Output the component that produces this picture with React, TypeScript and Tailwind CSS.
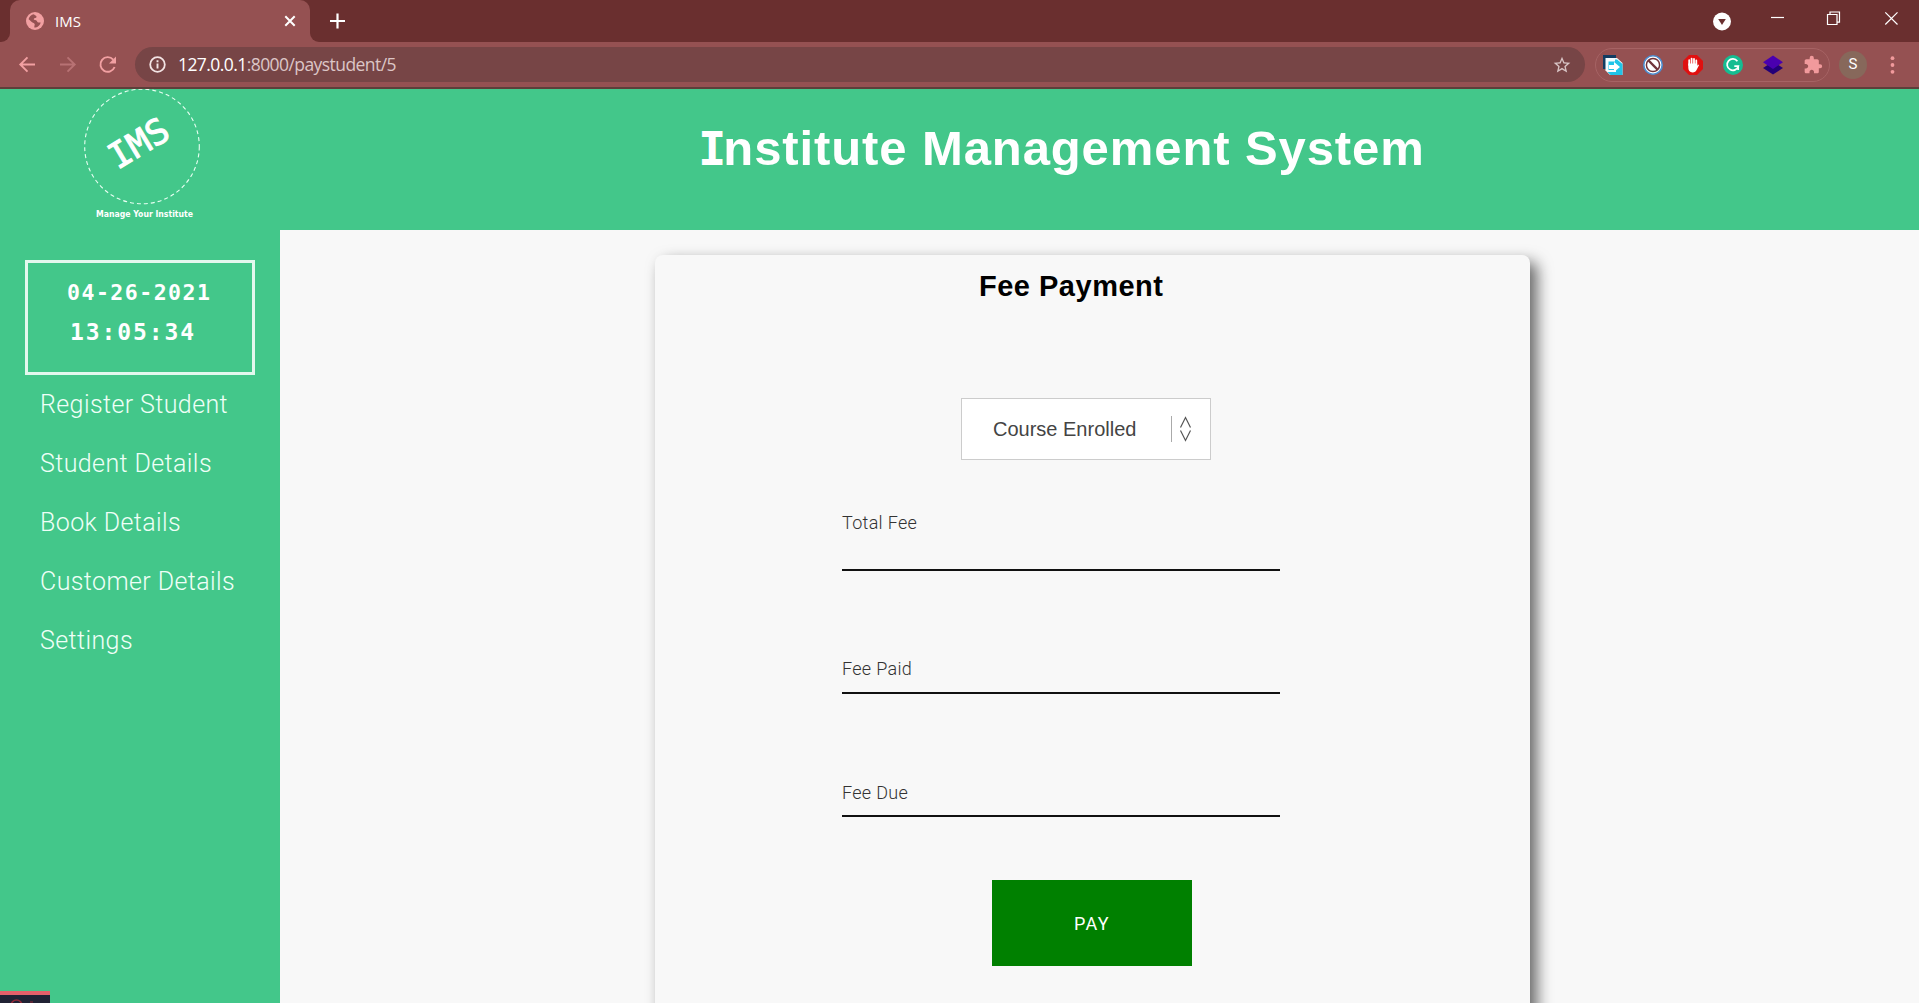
import React from "react";

const navItems = ["Register Student", "Student Details", "Book Details", "Customer Details", "Settings"];

function TabStrip() {
  return (
    <div className="flex h-[42px] w-full shrink-0 bg-[#6a2f2f]">
      <div className="flex w-[10px] items-end bg-[#955152]">
        <div className="h-full w-full rounded-br-[9px] bg-[#6a2f2f]" />
      </div>
      <div className="flex w-[300px] items-center rounded-t-[10px] bg-[#955152] pl-[16px] pr-[14px]">
        <svg width="18" height="18" viewBox="0 0 18 18">
          <circle cx="9" cy="9" r="9" fill="#f2a0a2" />
          <path d="M7 2.4 C7.8 3.6 9.8 3 10 4.8 C9.8 6.3 7.8 5.6 7.5 7.2 C7.6 8.4 10.6 7.6 11.2 9.2 C11.6 10.4 13.4 9.8 14.8 9.6 C14.6 12.4 12.6 15 9.2 15.5 C8.8 13.6 10 12.4 8.4 11.4 C6 11 4.4 9.2 2.4 8.2 C2.6 5.6 4.2 3.2 7 2.4Z" fill="#955152" transform="rotate(8 9 9)" />
        </svg>
        <span className="ml-[11px] text-[15px] leading-none text-white">IMS</span>
        <svg className="ml-auto" width="12" height="12" viewBox="0 0 12 12" stroke="#fff" strokeWidth="2">
          <path d="M1.3 1.3 10.7 10.7M10.7 1.3 1.3 10.7" />
        </svg>
      </div>
      <div className="w-[10px] bg-[#955152]">
        <div className="h-full w-full rounded-bl-[9px] bg-[#6a2f2f]" />
      </div>
      <svg className="ml-[10px] mt-[13px]" width="15" height="16" viewBox="0 0 15 16" stroke="#fff" strokeWidth="2.2">
        <path d="M7.5 .5V15.5M0 8H15" />
      </svg>
      <div className="ml-auto flex h-full w-[206px]">
        <svg width="206" height="42" viewBox="0 0 206 42" fill="none" stroke="#fff" strokeWidth="1.2">
          <circle cx="9" cy="21.5" r="9" fill="#fff" stroke="none" />
          <path d="M5.2 19H12.8L9 25Z" fill="#6a2f2f" stroke="none" />
          <path d="M58 17.5H71" />
          <path d="M114.5 14.5h9.5v10h-9.5z M117 14.5v-2.5h9.5v10.2h-2.5" />
          <path d="M172.3 12.3 184.5 24.5M184.5 12.3 172.3 24.5" />
        </svg>
      </div>
    </div>
  );
}

function Extensions() {
  return (
    <div className="ml-[10px] flex h-[34px] w-[235px] shrink-0 items-center gap-[20px] rounded-full border border-[#a66364] pl-[7px]">
      <svg width="20" height="20" viewBox="0 0 20 20">
        <path d="M0 0H13V14H0Z" fill="#123c62" />
        <path d="M2.500 3H14L19.500 8V20H7L2.500 15.500Z" fill="#f5fdff" />
        <path d="M5.500 6.500H12V4.500H14L19.500 9V20H7.500L4.500 17H13V15H5.500Z" fill="#20c4e8" />
        <path d="M6 10H11V7L17 12L11 17V14H6Z" fill="#fff" />
      </svg>
      <svg width="20" height="20" viewBox="0 0 20 20">
        <circle cx="10" cy="10" r="9.2" fill="#fff" stroke="#4b8ed2" strokeWidth="1.6" />
        <circle cx="10" cy="10" r="6.6" fill="#fff" stroke="#70343a" strokeWidth="1.5" />
        <path d="M5.4 5.4 14.6 14.6" stroke="#70343a" strokeWidth="2.2" />
      </svg>
      <svg width="20" height="20" viewBox="0 0 20 20">
        <path d="M6 0H14L20 6V14L14 20H6L0 14V6Z" fill="#e01010" />
        <path d="M6.2 10V5.2M8.6 9V3.6M11 9V3.9M13.3 10V5.4" stroke="#fff" strokeWidth="1.8" strokeLinecap="round" />
        <path d="M5.3 8.6H14.2V10.8L15.4 9.4 16 10.2 13.8 14.6C12.8 17 11.5 17.4 9.6 17.4 6.6 17.4 5.3 15.4 5.3 12.8Z" fill="#fff" />
      </svg>
      <svg width="20" height="20" viewBox="0 0 20 20" fill="none" stroke="#fff" strokeWidth="1.7">
        <circle cx="10" cy="10" r="10" fill="#15bd92" stroke="none" />
        <path d="M14.4 6.2A5.7 5.7 0 1 0 15.3 11.2H11.3M15.2 11V15" />
      </svg>
      <svg width="20" height="20" viewBox="0 0 20 20">
        <path d="M0 13 10 6.5 20 13 10 19.5Z" fill="#230078" />
        <path d="M0 7.2 10 .5 20 7.2 10 14Z" fill="#4a00b0" />
      </svg>
      <svg width="20" height="20" viewBox="0 0 24 24" fill="#f19a9c">
        <path d="M20.5 11H19V7c0-1.1-.9-2-2-2h-4V3.5a2.5 2.5 0 0 0-5 0V5H4c-1.1 0-1.99.9-1.99 2v3.8H3.5c1.49 0 2.7 1.21 2.7 2.7s-1.21 2.7-2.7 2.7H2V20c0 1.1.9 2 2 2h3.8v-1.5c0-1.49 1.21-2.7 2.7-2.7s2.7 1.21 2.7 2.7V22H17c1.1 0 2-.9 2-2v-4h1.5a2.5 2.5 0 0 0 0-5z" />
      </svg>
    </div>
  );
}

function Toolbar() {
  return (
    <div className="flex h-[47px] w-full shrink-0 items-center border-b-2 border-[#5c403a] bg-[#955152]">
      <svg width="135" height="45" viewBox="0 0 135 45" fill="none" strokeWidth="1.9">
        <path d="M35 22.5H20.5M27.5 15.3 20.3 22.5 27.5 29.7" stroke="#f2a0a2" />
        <path d="M60 22.5H74.5M67.5 15.3 74.7 22.5 67.5 29.7" stroke="#b87274" />
        <path d="M113.2 17.6A7.3 7.3 0 1 0 114.6 25" stroke="#f2a0a2" />
        <path d="M116 14.5V21.5H109Z" fill="#f2a0a2" />
      </svg>
      <div className="flex h-[35px] w-[1450px] items-center rounded-full bg-[#774546] pl-[14px] pr-[13px]">
        <svg width="17" height="17" viewBox="0 0 17 17" fill="none" stroke="#f3e4e4">
          <circle cx="8.5" cy="8.5" r="7.3" strokeWidth="1.8" />
          <path d="M8.5 7.5V12.5M8.5 4.2V6.2" strokeWidth="1.9" />
        </svg>
        <div className="ml-[12px] whitespace-nowrap text-[17.500px] leading-none tracking-[-0.57px] text-[#dcc6c6]">
          <span className="text-white">127.0.0.1</span>:8000/paystudent/5
        </div>
        <svg className="ml-auto" width="20" height="20" viewBox="0 0 24 24" fill="#d8c4c5">
          <path d="M22 9.24l-7.19-.62L12 2 9.19 8.63 2 9.24l5.46 4.73L5.82 21 12 17.27 18.18 21l-1.63-7.03L22 9.24zM12 15.4l-3.76 2.27 1-4.28-3.32-2.88 4.38-.38L12 6.1l1.71 4.04 4.38.38-3.32 2.88 1 4.28L12 15.4z" />
        </svg>
      </div>
      <Extensions />
      <div className="ml-[9px] flex h-[28px] w-[28px] items-center justify-center rounded-full bg-[#87685b] font-['Roboto'] text-[15px] text-white">S</div>
      <svg className="ml-[23px]" width="5" height="18" viewBox="0 0 5 18" fill="#f19a9c">
        <circle cx="2.5" cy="2.2" r="1.9" />
        <circle cx="2.5" cy="9" r="1.9" />
        <circle cx="2.5" cy="15.8" r="1.9" />
      </svg>
    </div>
  );
}

function Header() {
  return (
    <header className="flex h-[141px] shrink-0 bg-[#43c78a]">
      <svg width="280" height="141" viewBox="0 0 280 141" fill="#fff">
        <circle cx="142" cy="57.5" r="57.3" fill="none" stroke="#e9fff3" strokeWidth="1.1" strokeDasharray="4 3" />
        <g transform="translate(121 79) rotate(-31)" fontFamily="'Comic Sans MS', 'DejaVu Sans Mono', monospace" fontSize="35" stroke="#fff" strokeWidth="1">
          <text x="-4" y="0" textLength="64" lengthAdjust="spacing">IMS</text>
        </g>
        <text x="96" y="128" textLength="97" lengthAdjust="spacingAndGlyphs" fontFamily="'Comic Sans MS', 'DejaVu Sans', sans-serif" fontWeight="bold" fontSize="9">
          Manage Your Institute
        </text>
      </svg>
      <h1 className="ml-[418px] mt-[29px] whitespace-nowrap font-['Liberation_Sans'] text-[49px] font-bold leading-[60px] tracking-[0.9px] text-white">
        <span className="font-['DejaVu_Sans_Mono'] text-[47px] leading-none tracking-[-3px]">I</span>nstitute Management System
      </h1>
    </header>
  );
}

function Sidebar() {
  return (
    <aside className="flex w-[280px] shrink-0 flex-col bg-[#43c78a]">
      <div className="ml-[25px] mt-[30px] flex h-[115px] w-[230px] shrink-0 flex-col border-[3px] border-[#e3f8ee] font-['DejaVu_Sans_Mono'] font-bold text-white">
        <div className="ml-[39px] mt-[14px] whitespace-nowrap text-[21.500px] leading-[32px] tracking-[1.5px]">04-26-2021</div>
        <div className="ml-[42px] mt-[7px] whitespace-nowrap text-[23px] leading-[32px] tracking-[1.9px]">13:05:34</div>
      </div>
      <nav className="flex flex-col pl-[40px]">
        {navItems.map((item) => (
          <a key={item} className="h-[59px] whitespace-nowrap font-['Roboto'] text-[25px] font-light leading-[60px] tracking-[0.4px] text-[#effff7]">
            {item}
          </a>
        ))}
      </nav>
      <div className="mt-auto h-[12px] w-[50px] overflow-hidden border-t-4 border-[#e5606a] bg-[#202234]">
        <svg width="50" height="8" viewBox="0 0 50 8" fill="none" stroke="#8e2937">
          <circle cx="16.500" cy="10.500" r="5.500" strokeWidth="1.5" />
          <path d="M30 7h3" />
        </svg>
      </div>
    </aside>
  );
}

function Field({ label, className }: { label: string; className: string }) {
  return (
    <div className={"flex w-[438px] flex-col border-b-2 border-[#111] " + className}>
      <label className="whitespace-nowrap font-['Roboto'] text-[18px] font-light leading-[24px] tracking-[0.3px] text-[#333]">{label}</label>
    </div>
  );
}

function PaymentCard() {
  return (
    <form className="ml-[375px] mt-[25px] flex h-[800px] w-[875px] flex-col rounded-[8px] bg-[#f8f8f8] shadow-[7px_7px_15px_#666]">
      <h2 className="ml-[324px] mt-[13px] whitespace-nowrap font-['Liberation_Sans'] text-[29px] font-bold leading-[36px] tracking-[0.5px] text-black">Fee Payment</h2>
      <div className="ml-[306px] mt-[94px] flex h-[62px] w-[250px] shrink-0 items-center border border-[#ccc] bg-white pl-[31px]">
        <span className="w-[178px] whitespace-nowrap font-['Liberation_Sans'] text-[20px] text-[#444]">Course Enrolled</span>
        <svg width="22" height="26" viewBox="0 0 22 26" fill="none" stroke="#555" strokeWidth="1.2">
          <path d="M.5 0V26" stroke="#aaa" strokeWidth="1" />
          <path d="M9.500 11.500 14.500 1.500 19.500 11.500M9.500 14.500 14.500 24.500 19.500 14.500" />
        </svg>
      </div>
      <Field label="Total Fee" className="ml-[187px] mt-[51px] h-[60px]" />
      <Field label="Fee Paid" className="ml-[187px] mt-[86px] h-[37px]" />
      <Field label="Fee Due" className="ml-[187px] mt-[87px] h-[36px]" />
      <button type="button" className="ml-[337px] mt-[63px] h-[86px] w-[200px] shrink-0 bg-[#008000] font-['Roboto'] text-[18px] tracking-[1.300px] text-white">
        PAY
      </button>
    </form>
  );
}

export default function App() {
  return (
    <div className="flex h-[1003px] w-[1919px] flex-col overflow-hidden bg-[#f8f8f8] font-['Open_Sans','Noto_Sans',sans-serif]">
      <TabStrip />
      <Toolbar />
      <Header />
      <div className="flex min-h-0 flex-1">
        <Sidebar />
        <main className="flex-1 overflow-hidden bg-[#f8f8f8]">
          <PaymentCard />
        </main>
      </div>
    </div>
  );
}
